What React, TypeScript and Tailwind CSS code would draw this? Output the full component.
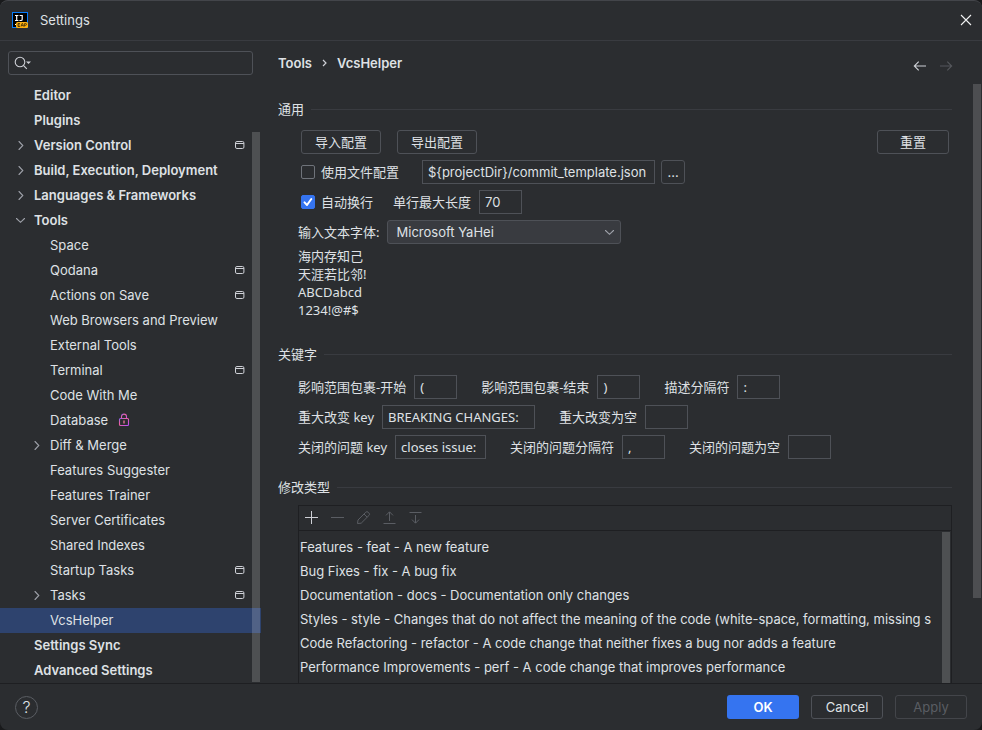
import type { ReactNode } from "react";

type TreeItem = {
  label: string;
  level: 0 | 1;
  arrow?: "right" | "down";
  project?: boolean;
  locked?: boolean;
  selected?: boolean;
};

const TREE: TreeItem[] = [
  { label: "Editor", level: 0 },
  { label: "Plugins", level: 0 },
  { label: "Version Control", level: 0, arrow: "right", project: true },
  { label: "Build, Execution, Deployment", level: 0, arrow: "right" },
  { label: "Languages & Frameworks", level: 0, arrow: "right" },
  { label: "Tools", level: 0, arrow: "down" },
  { label: "Space", level: 1 },
  { label: "Qodana", level: 1, project: true },
  { label: "Actions on Save", level: 1, project: true },
  { label: "Web Browsers and Preview", level: 1 },
  { label: "External Tools", level: 1 },
  { label: "Terminal", level: 1, project: true },
  { label: "Code With Me", level: 1 },
  { label: "Database", level: 1, locked: true },
  { label: "Diff & Merge", level: 1, arrow: "right" },
  { label: "Features Suggester", level: 1 },
  { label: "Features Trainer", level: 1 },
  { label: "Server Certificates", level: 1 },
  { label: "Shared Indexes", level: 1 },
  { label: "Startup Tasks", level: 1, project: true },
  { label: "Tasks", level: 1, arrow: "right", project: true },
  { label: "VcsHelper", level: 1, selected: true },
  { label: "Settings Sync", level: 0 },
  { label: "Advanced Settings", level: 0 },
];

const CHANGE_TYPES = [
  "Features - feat - A new feature",
  "Bug Fixes - fix - A bug fix",
  "Documentation - docs - Documentation only changes",
  "Styles - style - Changes that do not affect the meaning of the code (white-space, formatting, missing s",
  "Code Refactoring - refactor - A code change that neither fixes a bug nor adds a feature",
  "Performance Improvements - perf - A code change that improves performance",
];

function Chevron({ down = false }: { down?: boolean }) {
  return (
    <svg width="16" height="16" viewBox="0 0 16 16" fill="none" stroke="#9DA0A8" strokeWidth="1.1" strokeLinecap="round" aria-hidden="true">
      <path d={down ? "M4.5 6.5 8.5 10.3 12.5 6.5" : "M7 4.5 10.8 8.5 7 12.5"} />
    </svg>
  );
}

function ProjectIcon() {
  return (
    <svg width="10" height="10" viewBox="0 0 10 10" fill="none" stroke="#CED0D6" aria-hidden="true">
      <rect x="0.5" y="1.5" width="8.4" height="7" rx="1.4" />
      <path d="M0.5 3.5h8.4" />
    </svg>
  );
}

function LockIcon() {
  return (
    <svg width="12" height="14" viewBox="0 0 12 14" fill="none" aria-hidden="true">
      <defs>
        <linearGradient id="lock" x1="0" y1="0" x2="1" y2="1">
          <stop offset="0" stopColor="#8A62F5" />
          <stop offset="0.35" stopColor="#F0629A" />
          <stop offset="1" stopColor="#B750F5" />
        </linearGradient>
      </defs>
      <path d="M3.5 5.5V3.6a2.5 2.5 0 0 1 5 0v1.9" stroke="url(#lock)" strokeWidth="1.1" />
      <rect x="1.5" y="5.5" width="9" height="7" rx="1" stroke="url(#lock)" strokeWidth="1.1" />
      <path d="M6 7.5v3" stroke="#D0658C" strokeWidth="1.6" />
    </svg>
  );
}

function Logo() {
  return (
    <svg width="16" height="16" viewBox="0 0 16 16" aria-hidden="true">
      <rect width="16" height="16" fill="#087CFA" />
      <rect x="1" y="1" width="14" height="14" fill="#000" />
      <path d="M3 3.5h3.4M4.7 3.5v5M3 8.5h3.4M7.6 3.5h3.2M10.2 3.5v3.7q0 1.3-1.3 1.3H7.4" stroke="#fff" strokeWidth="1.2" fill="none" />
      <path d="M3 12.5h2" stroke="#fff" strokeWidth="1" />
      <rect x="4" y="10" width="12" height="6" rx="1.5" fill="#FCB010" />
      <path d="M8 11.5H6v3h2M6 13h1.8M9 14.5l1-3h.6l1 3M9.4 13.6h1.8M12.6 14.5v-3h1q.9 0 .9.9t-.9.9h-1" stroke="#3A2A08" strokeWidth="0.8" fill="none" />
    </svg>
  );
}

function TreeRow({ item }: { item: TreeItem }) {
  return (
    <li className={`relative h-[25px] ${item.selected ? "bg-[#2E436E]" : ""}`}>
      <a
        href="#"
        aria-current={item.selected ? "page" : undefined}
        className={`flex h-full items-center pr-4 pb-0.5 ${item.level === 0 ? "pl-3 font-semibold" : "pl-7"}`}
      >
        <span className="mr-1.5 flex w-4 shrink-0">
          {item.arrow && <Chevron down={item.arrow === "down"} />}
        </span>
        <span className="whitespace-nowrap">{item.label}</span>
        {item.locked && (
          <span className="ml-2.5">
            <LockIcon />
          </span>
        )}
        {item.project && (
          <span className="ml-auto">
            <ProjectIcon />
          </span>
        )}
      </a>
    </li>
  );
}

function PanelButton({ children, className }: { children: ReactNode; className: string }) {
  return (
    <button type="button" className={`h-6 rounded-[3px] border border-[#4E5157] text-center ${className}`}>
      {children}
    </button>
  );
}

function Section({ title, children, className = "" }: { title: string; children: ReactNode; className?: string }) {
  return (
    <section className={className}>
      <h2 className="flex h-5 items-center gap-[7px]">
        <span>{title}</span>
        <span className="h-px flex-1 bg-[#393B40]" />
      </h2>
      {children}
    </section>
  );
}

function Field({ id, label, value, width = "w-[43px]" }: { id: string; label: string; value: string; width?: string }) {
  return (
    <div className="flex items-center gap-2">
      <label htmlFor={id} className="whitespace-nowrap">{label}</label>
      <input id={id} defaultValue={value} className={`h-6 border border-[#4E5157] bg-transparent px-[5px] outline-none ${width}`} />
    </div>
  );
}

function CheckBox({ id, label, checked = false }: { id: string; label: string; checked?: boolean }) {
  return (
    <div className="flex items-center gap-1.5">
      <span className="relative flex">
        <input
          id={id}
          type="checkbox"
          defaultChecked={checked}
          className="peer size-3.5 appearance-none rounded-[2px] border border-[#6F737A] checked:border-[#3574F0] checked:bg-[#3574F0]"
        />
        <svg className="pointer-events-none absolute inset-0 hidden peer-checked:block" width="14" height="14" viewBox="0 0 14 14" fill="none" stroke="#fff" strokeWidth="2" strokeLinecap="round" strokeLinejoin="round" aria-hidden="true">
          <path d="M3.5 7.4 6 10l4.3-6" />
        </svg>
      </span>
      <label htmlFor={id} className="whitespace-nowrap">{label}</label>
    </div>
  );
}

function ToolButton({ label, disabled = true, children }: { label: string; disabled?: boolean; children: ReactNode }) {
  return (
    <button type="button" aria-label={label} disabled={disabled} className={disabled ? "text-[#5A5D63]" : "text-[#CED0D6]"}>
      <svg width="16" height="16" viewBox="0 0 16 16" fill="none" stroke="currentColor" aria-hidden="true">
        {children}
      </svg>
    </button>
  );
}

export default function App() {
  return (
    <div className="h-screen bg-[#191A1C]">
      <div className="flex h-full flex-col overflow-hidden rounded-lg border-t border-[#43454A] bg-[#2B2D30] font-['Inter','Noto_Sans_CJK_SC',sans-serif] text-[13px] leading-4 text-[#DFE1E5]">
        <header className="flex h-10 shrink-0 items-center border-b border-[#393B40] pr-[10px] pb-0.5 pl-3">
          <Logo />
          <h1 className="ml-3">Settings</h1>
          <button type="button" aria-label="Close" className="ml-auto">
            <svg width="12" height="12" viewBox="0 0 12 12" fill="none" stroke="#F0F1F2" strokeWidth="1.1" aria-hidden="true">
              <path d="M1 1 11 11M11 1 1 11" />
            </svg>
          </button>
        </header>

        <div className="flex min-h-0 flex-1">
          <aside className="relative flex w-[261px] shrink-0 flex-col pt-[10px]">
            <div className="mx-2 flex h-6 items-center rounded-[3px] border border-[#4E5157] pl-[5px]">
              <svg width="18" height="14" viewBox="0 0 18 14" fill="none" stroke="#CED0D6" strokeWidth="1.1" aria-hidden="true">
                <circle cx="6" cy="6" r="4.8" />
                <path d="M9.4 9.4 12.8 12.8" />
                <path d="M12 5.5h5l-2.5 2.5z" fill="#CED0D6" stroke="none" />
              </svg>
              <input aria-label="Search settings" className="min-w-0 flex-1 bg-transparent outline-none" />
            </div>
            <nav aria-label="Settings" className="mt-2 min-h-0 flex-1 overflow-hidden">
              <ul>
                {TREE.map((item) => (
                  <TreeRow key={item.label} item={item} />
                ))}
              </ul>
            </nav>
            <div className="absolute top-[91px] right-px bottom-px w-2 bg-white/17" />
          </aside>

          <main className="relative flex min-w-0 flex-1 flex-col pl-[17px]">
            <div className="flex h-[43px] shrink-0 items-center pr-7">
              <nav aria-label="Breadcrumb" className="flex items-center gap-2.5 font-semibold">
                <a href="#">Tools</a>
                <svg width="5" height="8" viewBox="0 0 5 8" fill="none" stroke="#CED0D6" strokeWidth="1.2" aria-hidden="true">
                  <path d="M1 1 4 4 1 7" />
                </svg>
                <a href="#" aria-current="page">VcsHelper</a>
              </nav>
              <div className="mt-1.5 ml-auto flex gap-2.5">
                <button type="button" aria-label="Back" className="text-[#CED0D6]">
                  <svg width="16" height="16" viewBox="0 0 16 16" fill="none" stroke="currentColor" strokeWidth="1.1" aria-hidden="true">
                    <path d="M14 8H2.5M6.7 3.6 2.3 8l4.4 4.4" />
                  </svg>
                </button>
                <button type="button" aria-label="Forward" disabled className="text-[#55575C]">
                  <svg width="16" height="16" viewBox="0 0 16 16" fill="none" stroke="currentColor" strokeWidth="1.1" aria-hidden="true">
                    <path d="M2 8h11.5M9.3 3.6 13.7 8l-4.4 4.4" />
                  </svg>
                </button>
              </div>
            </div>

            <div className="flex min-h-0 flex-1 flex-col overflow-hidden pt-[15px] pr-[30px] font-['Noto_Sans','Noto_Sans_CJK_SC',sans-serif]">
              <Section title="通用">
                <div className="mt-[11px] ml-5 flex flex-col gap-1.5">
                  <div className="flex gap-4 pr-[3px] pl-[3px]">
                    <PanelButton className="w-20">导入配置</PanelButton>
                    <PanelButton className="w-20">导出配置</PanelButton>
                    <PanelButton className="ml-auto w-[72px]">重置</PanelButton>
                  </div>
                  <div className="flex h-6 items-center pl-[3px]">
                    <CheckBox id="use-file" label="使用文件配置" />
                    <input
                      aria-label="配置文件路径"
                      defaultValue="${projectDir}/commit_template.json"
                      className="ml-[23px] h-6 w-[233px] border border-[#4E5157] bg-transparent px-[5px] font-['Inter',sans-serif] outline-none"
                    />
                    <PanelButton className="ml-1.5 w-6 font-['Inter',sans-serif]">...</PanelButton>
                  </div>
                  <div className="flex h-6 items-center gap-5 pl-[3px] font-['Inter','Noto_Sans_CJK_SC',sans-serif]">
                    <CheckBox id="wrap" label="自动换行" checked />
                    <Field id="max-length" label="单行最大长度" value="70" />
                  </div>
                  <div className="flex h-6 items-center gap-2">
                    <label htmlFor="font" className="whitespace-nowrap">输入文本字体:</label>
                    <div className="relative">
                      <select id="font" className="h-6 w-[234px] appearance-none rounded-[3px] border border-[#4E5157] bg-[#393B40] pl-2 font-['Inter',sans-serif] outline-none">
                        <option>Microsoft YaHei</option>
                      </select>
                      <span className="pointer-events-none absolute top-1 right-1">
                        <Chevron down />
                      </span>
                    </div>
                  </div>
                </div>
                <p className="mt-[3px] ml-5 leading-[18px] whitespace-pre-line">
                  {"海内存知己\n天涯若比邻!\nABCDabcd\n1234!@#$"}
                </p>
              </Section>

              <Section title="关键字" className="mt-[25px]">
                <div className="mt-[11px] ml-5 flex flex-col gap-1.5">
                  <div className="flex gap-6">
                    <Field id="scope-start" label="影响范围包裹-开始" value="(" />
                    <Field id="scope-end" label="影响范围包裹-结束" value=")" />
                    <Field id="separator" label="描述分隔符" value=":" />
                  </div>
                  <div className="flex gap-6">
                    <Field id="breaking" label="重大改变 key" value="BREAKING CHANGES:" width="w-[153px]" />
                    <Field id="breaking-empty" label="重大改变为空" value="" />
                  </div>
                  <div className="flex gap-6">
                    <Field id="closes" label="关闭的问题 key" value="closes issue:" width="w-[91px]" />
                    <Field id="closes-separator" label="关闭的问题分隔符" value="," />
                    <Field id="closes-empty" label="关闭的问题为空" value="" />
                  </div>
                </div>
              </Section>

              <Section title="修改类型" className="mt-[18px] flex min-h-0 flex-1 flex-col">
                <div className="mt-2 ml-5 flex min-h-0 flex-1 flex-col border border-b-0 border-[#1E1F22] font-['Inter',sans-serif]">
                  <div role="toolbar" aria-label="修改类型" className="flex h-[25px] shrink-0 items-center gap-2.5 border-b border-[#1E1F22] pb-0.5 pl-1">
                    <ToolButton label="Add" disabled={false}>
                      <path d="M8.5 2v13M2 8.5h13" />
                    </ToolButton>
                    <ToolButton label="Remove">
                      <path d="M2 8.5h13" />
                    </ToolButton>
                    <ToolButton label="Edit">
                      <path d="M2.5 14.5 3 11 10.8 3.2a1.6 1.6 0 0 1 2.3 0l.9.9a1.6 1.6 0 0 1 0 2.3L6.2 14.2zM9 5l3.2 3.2" />
                    </ToolButton>
                    <ToolButton label="Move up">
                      <path d="M2.5 14.5h12M8.5 12V3M5 6.4 8.5 2.8l3.5 3.6" />
                    </ToolButton>
                    <ToolButton label="Move down">
                      <path d="M2.5 3.5h12M8.5 6v8M5 10.6 8.5 14.2l3.5-3.6" />
                    </ToolButton>
                  </div>
                  <div className="relative min-h-0 flex-1 overflow-hidden">
                    <ul className="pt-1 pl-px">
                      {CHANGE_TYPES.map((text) => (
                        <li key={text} className="flex h-6 items-center whitespace-nowrap">{text}</li>
                      ))}
                    </ul>
                    <div className="absolute top-px right-px bottom-0 w-2 bg-white/17" />
                  </div>
                </div>
              </Section>
            </div>
            <div className="absolute top-[43px] right-px bottom-[85px] w-2 bg-[#4D4E51]" />
          </main>
        </div>

        <footer className="flex h-[47px] shrink-0 items-center gap-3 border-t border-[#1E1F22] px-[15px]">
          <button type="button" aria-label="Help" className="mr-auto size-[23px] rounded-full border border-[#5A5D63] text-base leading-5 font-light">
            ?
          </button>
          <button type="button" className="h-6 w-[72px] rounded-[3px] bg-[#3574F0] font-semibold text-white">OK</button>
          <PanelButton className="w-[72px]">Cancel</PanelButton>
          <button type="button" disabled className="h-6 w-[72px] rounded-[3px] border border-[#43454A] text-[#5A5D63]">
            Apply
          </button>
        </footer>
      </div>
    </div>
  );
}
